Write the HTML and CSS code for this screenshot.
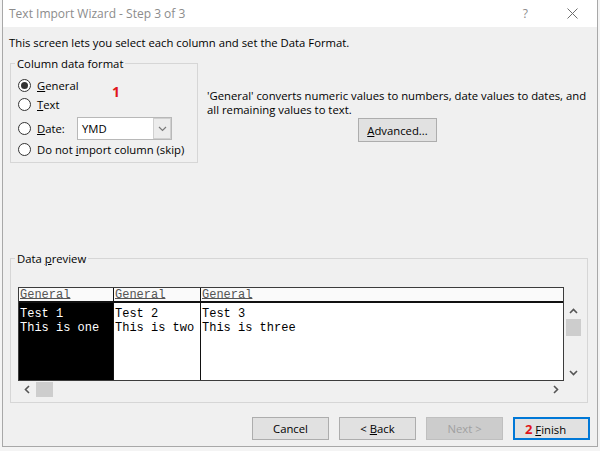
FILE: index.html
```html
<!DOCTYPE html>
<html>
<head>
<meta charset="utf-8">
<link rel="stylesheet" href="styles.css">
</head>
<body>
<div class="window">
  <div class="titlebar">
    <span class="title">Text Import Wizard - Step 3 of 3</span>
    <span class="help">?</span>
    <svg class="close" width="11" height="11" viewBox="0 0 11 11"><path d="M0.5 0.5 L10.5 10.5 M10.5 0.5 L0.5 10.5" stroke="#6e6e6e" stroke-width="1" fill="none"/></svg>
  </div>
  <div class="content">
    <p class="intro">This screen lets you select each column and set the Data Format.</p>
    <div class="top">
      <div class="group format">
        <span class="legend">Column data format</span>
        <span class="badge one">1</span>
        <div class="radio r1"><span class="dot checked"></span><span><u>G</u>eneral</span></div>
        <div class="radio r2"><span class="dot"></span><span><u>T</u>ext</span></div>
        <div class="radio r3"><span class="dot"></span><span class="datelabel"><u>D</u>ate:</span>
          <div class="combo"><span class="combo-text">YMD</span><span class="combo-btn"><svg width="9" height="6" viewBox="0 0 9 6"><path d="M1 1 L4.5 4.5 L8 1" stroke="#7a7a7a" stroke-width="1.2" fill="none"/></svg></span></div>
        </div>
        <div class="radio r4"><span class="dot"></span><span>Do not <u>i</u>mport column (skip)</span></div>
      </div>
      <div class="desc">
        <p>'General' converts numeric values to numbers, date values to dates, and<br>all remaining values to text.</p>
        <button class="btn adv"><u>A</u>dvanced...</button>
      </div>
    </div>
    <div class="group preview">
      <span class="legend">Data <u>p</u>review</span>
      <div class="pv">
        <div class="table">
          <div class="col c1"><div class="hd">General</div><div class="cells">Test 1<br>This is one</div></div>
          <div class="col c2"><div class="hd">General</div><div class="cells">Test 2<br>This is two</div></div>
          <div class="col c3"><div class="hd">General</div><div class="cells">Test 3<br>This is three</div></div>
        </div>
        <div class="vscroll">
          <span class="arr"><svg width="9" height="6" viewBox="0 0 9 6"><path d="M1 5 L4.5 1.5 L8 5" stroke="#555" stroke-width="1.6" fill="none"/></svg></span>
          <span class="vthumb"></span>
          <span class="vspace"></span>
          <span class="arr"><svg width="9" height="6" viewBox="0 0 9 6"><path d="M1 1 L4.5 4.5 L8 1" stroke="#555" stroke-width="1.6" fill="none"/></svg></span>
        </div>
        <div class="hscroll">
          <span class="harr"><svg width="6" height="9" viewBox="0 0 6 9"><path d="M5 1 L1.5 4.5 L5 8" stroke="#555" stroke-width="1.6" fill="none"/></svg></span>
          <span class="hthumb"></span>
          <span class="hspace"></span>
          <span class="harr"><svg width="6" height="9" viewBox="0 0 6 9"><path d="M1 1 L4.5 4.5 L1 8" stroke="#555" stroke-width="1.6" fill="none"/></svg></span>
        </div>
      </div>
    </div>
    <div class="buttons">
      <button class="btn">Cancel</button>
      <button class="btn">&lt; <u>B</u>ack</button>
      <button class="btn disabled">Next &gt;</button>
      <button class="btn default"><span class="badge two">2</span> <u>F</u>inish</button>
    </div>
  </div>
</div>
</body>
</html>
```
FILE: styles.css
```css
* { box-sizing: border-box; }
html, body { margin: 0; padding: 0; }
body {
  background: #f4f4f4;
  font-family: "Open Sans", "Noto Sans", sans-serif;
  font-size: 11.3px;
  color: #000;
}
u { text-decoration: underline; text-underline-offset: 1px; }
.window {
  margin-left: 2px;
  width: 596px;
  height: 447px;
  border: 1px solid #a8a8a8;
  border-top: none;
  background: #f0f0f0;
  display: flex;
  flex-direction: column;
}
.titlebar {
  height: 27px;
  background: #fff;
  display: flex;
  align-items: center;
  padding-left: 6px;
}
.title { color: #8c8c8c; font-size: 12px; flex: 1; }
.help { color: #8c8c8c; font-size: 12px; margin-right: 39px; }
.close { margin-right: 19px; }
.content { flex: 1; display: flex; flex-direction: column; }
.intro { margin: 8px 0 0 6px; line-height: 15px; height: 15px; }
.top { display: flex; margin-top: 13px; }
.group {
  position: relative;
  border: 1px solid #d6d6d6;
  margin-left: 7px;
}
.legend {
  position: absolute;
  top: -8px;
  left: 4px;
  padding: 0 2px;
  line-height: 15px;
  background: #f0f0f0;
}
.format {
  width: 188px;
  height: 100px;
  padding: 12px 0 0 7px;
}
.badge { color: #e0151b; font-weight: bold; font-size: 14px; }
.one { position: absolute; left: 101px; top: 20px; line-height: 16px; }
.radio { display: flex; align-items: center; height: 19px; }
.r3 { height: 23px; margin-top: 3px; }
.dot {
  width: 13px; height: 13px;
  border: 1px solid #333;
  border-radius: 50%;
  background: #fff;
  margin-right: 6px;
  display: flex; align-items: center; justify-content: center;
  flex: none;
}
.dot.checked::after {
  content: "";
  width: 7px; height: 7px;
  border-radius: 50%;
  background: #333;
}
.datelabel { width: 40px; }
.combo {
  width: 95px; height: 23px;
  border: 1px solid #b8b8b8;
  background: #fff;
  display: flex;
}
.combo-text { flex: 1; padding-left: 4px; line-height: 21px; }
.combo-btn {
  width: 18px;
  background: #ececec;
  border: 1px solid #d0d0d0;
  display: flex; align-items: center; justify-content: center;
}
.desc { flex: 1; margin-left: 9px; padding-top: 26px; padding-right: 6px; display: flex; flex-direction: column; align-items: center; }
.desc p { margin: 0; line-height: 14px; align-self: flex-start; white-space: nowrap; }
.btn {
  font: inherit;
  color: #000;
  width: 77px; height: 23px;
  background: #e1e1e1;
  border: 1px solid #adadad;
  padding: 0;
}
.adv { width: 79px; height: 24px; margin-top: 1px; margin-left: -3px; }
.preview {
  margin-top: 95px;
  width: 578px;
  height: 145px;
  padding: 28px 0 0 7px;
}
.pv {
  display: grid;
  grid-template-columns: 546px 17px;
  grid-template-rows: 94px 17px;
  column-gap: 1px;
}
.table {
  border: 1px solid #3c3c3c;
  display: grid;
  grid-template-columns: 95px 87px 1fr;
  font-family: "Liberation Mono", "Courier New", monospace;
  font-size: 12px;
}
.col { border-right: 1px solid #111; display: flex; flex-direction: column; }
.c3 { border-right: none; }
.hd {
  height: 15px;
  padding-top: 3px;
  line-height: 9px;
  border-bottom: 2px solid #111;
  color: #555;
  text-decoration: underline;
  text-underline-offset: 0px;
  background: #fafafa;
  padding-left: 1px;
  white-space: nowrap;
}
.cells { flex: 1; padding: 4px 0 0 1px; line-height: 14px; white-space: nowrap; background: #fff; }
.c1 .cells { background: #000; color: #fff; }
.vscroll {
  margin-top: 15px;
  display: flex; flex-direction: column; align-items: center;
}
.arr { height: 17px; width: 17px; display: flex; align-items: center; justify-content: center; }
.vthumb { width: 15px; height: 17px; background: #cdcdcd; }
.vspace { flex: 1; }
.hscroll { display: flex; align-items: center; padding-left: 2px; padding-right: 2px; }
.harr { width: 13px; height: 17px; display: flex; align-items: center; justify-content: center; }
.hthumb { width: 17px; height: 15px; background: #cdcdcd; margin-left: 3px; }
.hspace { flex: 1; }
.buttons {
  margin-top: 14px;
  display: flex;
  justify-content: flex-end;
  gap: 10px;
  padding-right: 7px;
}
.disabled { background: #cccccc; border-color: #bfbfbf; color: #a0a0a0; }
.default { border: 2px solid #0078d7; padding-right: 12px; }
.two { font-size: 13px; }
```
